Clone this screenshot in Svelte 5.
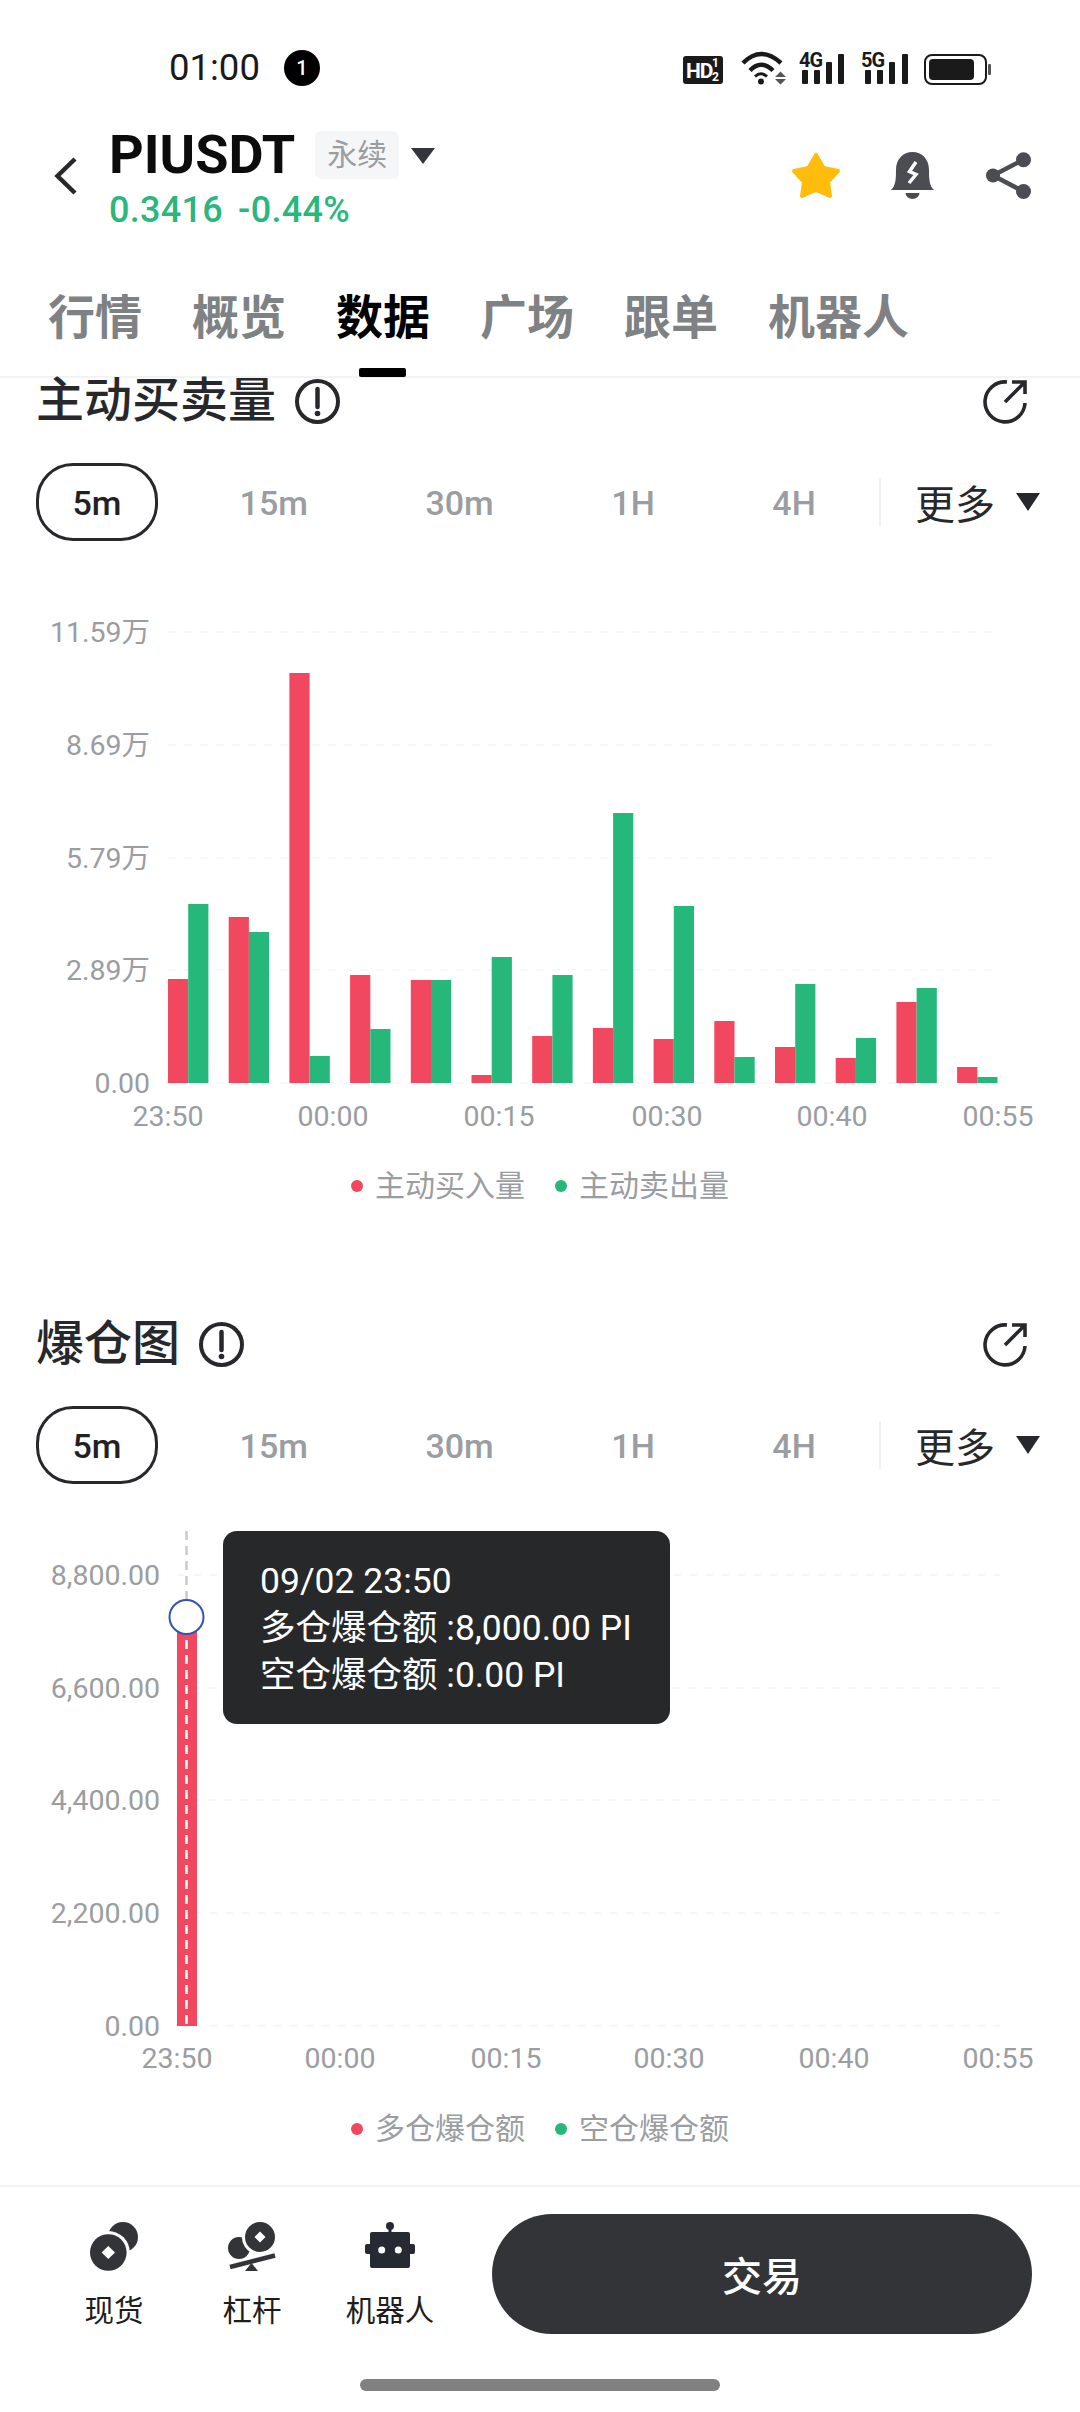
<script lang="ts">
  const tabs = ['行情', '概览', '数据', '广场', '跟单', '机器人'];
  const ranges = ['5m', '15m', '30m', '1H', '4H'];
  const baseline1 = 1083;
  const baseline2 = 2026;

  // tops of the buy / sell bars, in page pixels
  const volumes = [
    [979, 904], [917, 932], [673, 1056], [975, 1029], [980, 980], [1075, 957], [1036, 975],
    [1028, 813], [1039, 906], [1021, 1057], [1047, 984], [1058, 1038], [1002, 988], [1067, 1077]
  ];

  const yLabels1 = [['11.59万', 632], ['8.69万', 745], ['5.79万', 858], ['2.89万', 970], ['0.00', 1083]] as const;
  const xLabels1 = [['23:50', 168], ['00:00', 333], ['00:15', 499], ['00:30', 667], ['00:40', 832], ['00:55', 998]] as const;
  const yLabels2 = [['8,800.00', 1575], ['6,600.00', 1688], ['4,400.00', 1800], ['2,200.00', 1913], ['0.00', 2026]] as const;
  const xLabels2 = [['23:50', 177], ['00:00', 340], ['00:15', 506], ['00:30', 669], ['00:40', 834], ['00:55', 998]] as const;
</script>

{#snippet heading(title: string)}
  <div class="heading">
    <h2>{title}</h2>
    <svg class="info" viewBox="0 0 47 47" aria-hidden="true">
      <circle cx="23.5" cy="23.5" r="20.5" fill="none" stroke="#26282b" stroke-width="4" />
      <path d="M23.5 11v18" stroke="#26282b" stroke-width="4.5" stroke-linecap="round" />
      <circle cx="23.5" cy="35.5" r="2.8" fill="#26282b" />
    </svg>
    <svg class="export" viewBox="0 0 48 48" aria-hidden="true">
      <path d="M26 5A20 20 0 1 0 44 26M24 25 44 5M31 5H44V17" fill="none" stroke="#26282b" stroke-width="3.6" />
    </svg>
  </div>
{/snippet}

{#snippet filters()}
  <div class="filters">
    {#each ranges as range, i}
      <span class="range" class:active={i === 0}>{range}</span>
    {/each}
    <span class="divider"></span>
    <span class="more">更多<i class="tri"></i></span>
  </div>
{/snippet}

{#snippet legend(a: string, b: string)}
  <div class="legend">
    <span class="dot red"></span><span class="name">{a}</span>
    <span class="dot green"></span><span class="name">{b}</span>
  </div>
{/snippet}

<div class="app">
  <div class="status">
    <span class="time">01:00</span>
    <span class="badge">1</span>
    <svg class="status-icons" viewBox="680 44 315 48" aria-hidden="true">
      <rect x="683" y="56" width="40" height="28" rx="3" fill="#1a1a1a" />
      <text x="686" y="78" class="hd">HD</text>
      <text x="712" y="67" class="hd-small">1</text>
      <text x="712" y="81" class="hd-small">2</text>
      <g fill="none" stroke="#1a1a1a" stroke-width="4.4">
        <path d="M743 63Q761 45 781 63" />
        <path d="M750 70.5Q761 59 773 70.5" />
      </g>
      <path d="M755 76.5Q761 71 767 76.5" fill="none" stroke="#1a1a1a" stroke-width="3" />
      <circle cx="761" cy="81.5" r="3" fill="#1a1a1a" />
      <path d="M775 77l5.5-5.5 5.5 5.5zM775 79l5.5 5.5 5.5-5.5z" fill="#555" />

      <text x="799" y="67" class="net">4G</text>
      <rect x="802" y="70" width="6" height="14" rx="1" fill="#1a1a1a" />
      <rect x="814" y="70" width="6" height="14" rx="1" fill="#1a1a1a" />
      <rect x="826" y="62" width="6" height="22" rx="1" fill="#1a1a1a" />
      <rect x="838" y="54" width="6" height="30" rx="1" fill="#1a1a1a" />

      <text x="861" y="67" class="net">5G</text>
      <rect x="865" y="70" width="6" height="14" rx="1" fill="#1a1a1a" />
      <rect x="877" y="70" width="6" height="14" rx="1" fill="#1a1a1a" />
      <rect x="889" y="62" width="6" height="22" rx="1" fill="#1a1a1a" />
      <rect x="902" y="54" width="6" height="30" rx="1" fill="#1a1a1a" />

      <rect x="925" y="55" width="61" height="29" rx="7" fill="none" stroke="#1a1a1a" stroke-width="2" />
      <rect x="929" y="59" width="45" height="21" rx="4" fill="#1a1a1a" />
      <rect x="988" y="64" width="3" height="11" rx="1" fill="#555" />
    </svg>
  </div>

  <header class="header">
    <svg class="back" viewBox="0 0 23 38" aria-hidden="true">
      <path d="M21 2 3.5 19 21 36" fill="none" stroke="#26282b" stroke-width="4.5" />
    </svg>
    <div class="symbol">
      <div class="title-row">
        <span class="title">PIUSDT</span>
        <span class="chip">永续</span>
        <i class="caret"></i>
      </div>
      <div class="price"><span>0.3416</span><span>-0.44%</span></div>
    </div>
    <div class="actions">
      <svg class="star" viewBox="0 0 50 47" aria-hidden="true">
        <path d="M25 3 32.5 16 47 19 37 30 39 44 25 38 11 44 13 30 3 19 17.5 16Z" fill="#fdbd0a" stroke="#fdbd0a" stroke-width="4" stroke-linejoin="round" />
      </svg>
      <svg class="bell" viewBox="0 0 43 47" aria-hidden="true">
        <path d="M0 38C4 34 5 30 5 18 5 7 12 0 21.5 0S38 7 38 18C38 30 39 34 43 38Z" fill="#4b4d52" />
        <path d="M14.5 41h14a7 6 0 0 1-14 0Z" fill="#4b4d52" />
        <path d="M25 10 18.5 19.5 25 22.5 18 31" fill="none" stroke="#fff" stroke-width="3.5" />
      </svg>
      <svg class="share" viewBox="0 0 45 47" aria-hidden="true">
        <path d="M37.5 7.7 7 23.5 37.5 39.5" fill="none" stroke="#4b4d52" stroke-width="4.5" />
        <circle cx="37.5" cy="7.7" r="7.5" fill="#4b4d52" />
        <circle cx="7" cy="23.5" r="7" fill="#4b4d52" />
        <circle cx="37.5" cy="39.5" r="7.5" fill="#4b4d52" />
      </svg>
    </div>
  </header>

  <nav class="tabs">
    {#each tabs as tab, i}
      <span class="tab" class:active={i === 2}>{tab}</span>
    {/each}
  </nav>

  <section class="section">
    {@render heading('主动买卖量')}
    {@render filters()}
    <svg class="chart" viewBox="0 541 1080 609" aria-hidden="true">
      {#each yLabels1 as [label, y]}
        <line x1="168" x2="995" y1={y} y2={y} class="grid" />
        <text x="150" y={y + 10} text-anchor="end" class="axis">{label}</text>
      {/each}
      {#each volumes as [buy, sell], i}
        <rect x={168 + i * 60.7} y={buy} width="20.2" height={baseline1 - buy} fill="#f2485f" />
        <rect x={188.2 + i * 60.7} y={sell} width="20.2" height={baseline1 - sell} fill="#26b87a" />
      {/each}
      {#each xLabels1 as [label, x]}
        <text {x} y="1126" text-anchor="middle" class="axis">{label}</text>
      {/each}
    </svg>
    {@render legend('主动买入量', '主动卖出量')}
  </section>

  <section class="section">
    {@render heading('爆仓图')}
    {@render filters()}
    <div class="chart-wrap">
      <svg class="chart" viewBox="0 1484 1080 609" aria-hidden="true">
        {#each yLabels2 as [label, y]}
          <line x1="177" x2="1000" y1={y} y2={y} class="grid" />
          <text x="160" y={y + 10} text-anchor="end" class="axis">{label}</text>
        {/each}
        <rect x="177" y="1617" width="20" height={baseline2 - 1617} fill="#f2485f" />
        <line x1="186.5" x2="186.5" y1="1531" y2="1600" class="cross" />
        <line x1="186.5" x2="186.5" y1="1640" y2={baseline2} class="cross on-bar" />
        <circle cx="186.5" cy="1617" r="17" fill="#fff" stroke="#3354b0" stroke-width="2" />
        {#each xLabels2 as [label, x]}
          <text {x} y="2068" text-anchor="middle" class="axis">{label}</text>
        {/each}
      </svg>
      <div class="tooltip">
        <div>09/02 23:50</div>
        <div>多仓爆仓额 :8,000.00 PI</div>
        <div>空仓爆仓额 :0.00 PI</div>
      </div>
    </div>
    {@render legend('多仓爆仓额', '空仓爆仓额')}
  </section>

  <footer class="footer">
    <div class="shortcuts">
      <div class="shortcut">
        <svg viewBox="0 0 50 49" aria-hidden="true">
          <circle cx="34" cy="15" r="15" fill="#323437" />
          <circle cx="19.3" cy="30.5" r="21.5" fill="#fff" />
          <circle cx="19.3" cy="30.5" r="18.3" fill="#323437" />
          <path d="M19.3 24 26 30.5 19.3 37 12.6 30.5Z" fill="#fff" />
        </svg>
        <span>现货</span>
      </div>
      <div class="shortcut">
        <svg viewBox="0 0 50 49" aria-hidden="true">
          <circle cx="12" cy="26" r="11" fill="#323437" />
          <circle cx="33" cy="15" r="18" fill="#fff" />
          <circle cx="33" cy="15" r="15" fill="#323437" />
          <path d="M33 9.5 38.5 15 33 20.5 27.5 15Z" fill="#fff" />
          <path d="M3 45 48 33.5" stroke="#fff" stroke-width="9" />
          <path d="M3 45 48 33.5" stroke="#323437" stroke-width="4.5" />
          <path d="M18 49 24.5 41 31 49Z" fill="#323437" />
        </svg>
        <span>杠杆</span>
      </div>
      <div class="shortcut">
        <svg viewBox="0 0 50 49" aria-hidden="true">
          <circle cx="25" cy="4" r="4" fill="#262a33" />
          <rect x="23.5" y="4" width="3" height="8" fill="#262a33" />
          <rect x="5" y="10" width="40" height="36" rx="2" fill="#262a33" />
          <rect x="0" y="22" width="50" height="10" rx="2" fill="#262a33" />
          <circle cx="16.7" cy="28" r="3.5" fill="#fff" />
          <circle cx="33.3" cy="28" r="3.5" fill="#fff" />
        </svg>
        <span>机器人</span>
      </div>
    </div>
    <button class="trade">交易</button>
    <div class="home"></div>
  </footer>
</div>

<style>
  :global(body) {
    margin: 0;
    background: #fff;
  }

  .app {
    display: flex;
    flex-direction: column;
    width: 1080px;
    height: 2412px;
    overflow: hidden;
    background: #fff;
    font-family: Roboto, "Noto Sans CJK SC", sans-serif;
  }

  .status {
    display: flex;
    align-items: center;
    box-sizing: border-box;
    height: 100px;
    padding: 36px 89px 0 169px;
  }

  .time {
    font-size: 36.5px;
    color: #1a1a1a;
    line-height: 64px;
  }

  .badge {
    display: flex;
    align-items: center;
    justify-content: center;
    width: 36px;
    height: 36px;
    margin-left: 24px;
    border-radius: 50%;
    background: #000;
    color: #fff;
    font-size: 20px;
    font-weight: 500;
  }

  .status-icons {
    flex-shrink: 0;
    width: 315px;
    height: 48px;
    margin-left: auto;
    margin-right: -4px;
  }

  .hd {
    font-size: 21px;
    font-weight: 700;
    fill: #fff;
    letter-spacing: -1px;
  }

  .hd-small {
    font-size: 12px;
    font-weight: 700;
    fill: #fff;
  }

  .net {
    font-size: 20px;
    font-weight: 700;
    fill: #1a1a1a;
    letter-spacing: -1px;
  }

  .header {
    display: flex;
    box-sizing: border-box;
    height: 170px;
    padding: 31px 49px 0 54px;
  }

  .back {
    width: 23px;
    height: 38px;
    margin-top: 26px;
  }

  .symbol {
    margin-left: 32px;
  }

  .title-row {
    display: flex;
    align-items: flex-start;
    height: 48px;
  }

  .title {
    font-size: 54px;
    font-weight: 700;
    line-height: 48px;
    color: #0c0c0c;
  }

  .chip {
    margin-left: 20px;
    padding: 0 12px;
    border-radius: 6px;
    background: #f5f6f7;
    color: #9a9da1;
    font-size: 30px;
    line-height: 48px;
  }

  .caret {
    width: 0;
    height: 0;
    margin: 17px 0 0 12px;
    border-left: 12px solid transparent;
    border-right: 12px solid transparent;
    border-top: 16px solid #33353a;
  }

  .price {
    display: flex;
    gap: 15px;
    margin-top: 12px;
    color: #2ab77d;
    font-size: 36px;
    font-weight: 500;
    line-height: 38px;
    letter-spacing: 0.3px;
  }

  .actions {
    display: flex;
    align-items: flex-start;
    margin-left: auto;
    padding-top: 21px;
  }

  .star {
    width: 50px;
    height: 47px;
  }

  .bell {
    width: 43px;
    height: 47px;
    margin-left: 50px;
  }

  .share {
    width: 45px;
    height: 47px;
    margin-left: 52px;
  }

  .tabs {
    display: flex;
    gap: 50px;
    box-sizing: border-box;
    height: 108px;
    padding: 25px 0 0 48px;
    border-bottom: 2px solid #f2f3f4;
  }

  .tab {
    position: relative;
    height: 46px;
    color: #7f8285;
    font-size: 47px;
    font-weight: 600;
    line-height: 46px;
  }

  .tab.active {
    color: #000;
    font-weight: 700;
  }

  .tab.active::after {
    content: '';
    position: absolute;
    left: 23px;
    top: 73px;
    width: 47px;
    height: 9px;
    border-radius: 2px;
    background: #000;
  }

  .section {
    padding: 0 36px;
    margin-bottom: 115px;
  }

  .section + .section {
    margin-bottom: 0;
  }

  .heading {
    display: flex;
    align-items: center;
    height: 46px;
  }

  h2 {
    margin: 0;
    color: #26282b;
    font-size: 48px;
    font-weight: 500;
    line-height: 46px;
  }

  .info {
    width: 47px;
    height: 47px;
    margin-left: 18px;
  }

  .export {
    width: 48px;
    height: 48px;
    margin-left: auto;
    margin-right: 15px;
  }

  .filters {
    display: flex;
    align-items: center;
    gap: 45.6px;
    height: 78px;
    margin-top: 39px;
  }

  .range {
    flex-shrink: 0;
    box-sizing: border-box;
    padding: 2px 36px 0;
    color: #9a9da1;
    font-size: 34px;
    font-weight: 500;
    line-height: 70px;
    border: 3px solid transparent;
    margin: 0 -3px;
  }

  .range.active {
    width: 122px;
    height: 78px;
    margin: 0;
    padding: 2px 0 0;
    border-color: #26282b;
    border-radius: 37px;
    color: #1f2124;
    text-align: center;
  }

  .divider {
    flex-shrink: 0;
    width: 2px;
    height: 48px;
    margin-left: -18px;
    margin-right: -12px;
    background: #eff0f1;
  }

  .more {
    display: flex;
    align-items: center;
    flex-shrink: 0;
    margin-right: 5px;
    color: #26282b;
    font-size: 40px;
    white-space: nowrap;
  }

  .tri {
    width: 0;
    height: 0;
    margin-left: 21px;
    border-left: 12px solid transparent;
    border-right: 12px solid transparent;
    border-top: 18px solid #26282b;
  }

  .chart-wrap {
    position: relative;
    margin: 0 -36px;
  }

  .chart {
    display: block;
    width: 1080px;
    height: 609px;
    margin: 0 -36px;
  }

  .chart-wrap .chart {
    margin: 0;
  }

  .grid {
    stroke: #f6f7f8;
    stroke-width: 2;
    stroke-dasharray: 8 8;
  }

  .axis {
    fill: #9a9da1;
    font-size: 28.5px;
  }

  .cross {
    stroke: #c8cacd;
    stroke-width: 2.5;
    stroke-dasharray: 9 6;
  }

  .cross.on-bar {
    stroke: #fff;
  }

  .tooltip {
    position: absolute;
    left: 223px;
    top: 47px;
    box-sizing: border-box;
    width: 447px;
    height: 193px;
    padding: 27px 0 0 37px;
    border-radius: 14px;
    background: #272829;
    color: #fff;
    font-size: 35.5px;
    line-height: 47px;
    white-space: nowrap;
  }

  .legend {
    display: flex;
    align-items: center;
    justify-content: center;
    height: 40px;
    margin-top: 16px;
  }

  .dot {
    width: 12px;
    height: 12px;
    margin-right: 12px;
    border-radius: 50%;
  }

  .dot.red {
    background: #f2485f;
  }

  .dot.green {
    margin-left: 30px;
    background: #26b87a;
  }

  .name {
    color: #9a9da1;
    font-size: 30px;
    line-height: 40px;
  }

  .footer {
    position: relative;
    display: flex;
    box-sizing: border-box;
    height: 227px;
    margin-top: auto;
    padding: 27px 48px 0 0;
    border-top: 2px solid #f2f3f4;
  }

  .shortcuts {
    display: grid;
    grid-template-columns: repeat(3, 138px);
    flex: 1;
    align-self: flex-start;
    padding: 8px 0 0 45px;
  }

  .shortcut {
    display: flex;
    flex-direction: column;
    align-items: center;
    color: #1d1d1d;
    font-size: 29.5px;
    line-height: 36px;
    white-space: nowrap;
  }

  .shortcut svg {
    display: block;
    width: 50px;
    height: 49px;
    margin-bottom: 22px;
  }

  .trade {
    width: 540px;
    height: 120px;
    padding: 0;
    border: none;
    border-radius: 60px;
    background: #323437;
    color: #fff;
    font-family: inherit;
    font-size: 40px;
    font-weight: 500;
  }

  .home {
    position: absolute;
    left: 360px;
    top: 192px;
    width: 360px;
    height: 12px;
    border-radius: 6px;
    background: #808080;
  }
</style>
